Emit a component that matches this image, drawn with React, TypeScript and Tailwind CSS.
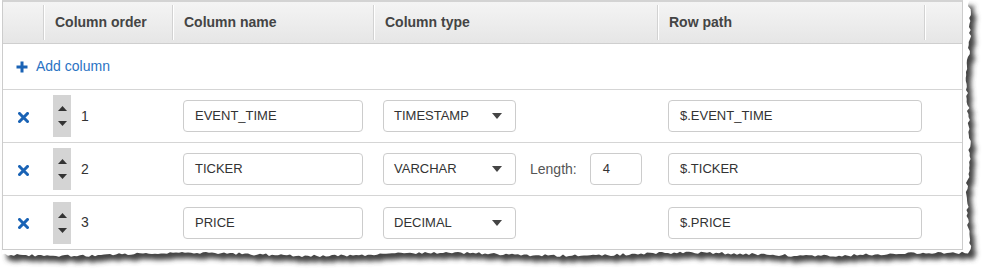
import React from "react";

const font = { fontFamily: '"Liberation Sans", Arial, sans-serif' };

const rows = [
  { n: 1, name: "EVENT_TIME", type: "TIMESTAMP", path: "$.EVENT_TIME" },
  { n: 2, name: "TICKER", type: "VARCHAR", path: "$.TICKER", length: "4" },
  { n: 3, name: "PRICE", type: "DECIMAL", path: "$.PRICE" },
];

const cols = "grid grid-cols-[40px_129px_201px_284px_267px_38px]";

function rand(seed: number) {
  const x = Math.sin(seed * 12.9898) * 43758.5453;
  return x - Math.floor(x);
}

function tornPath(dx: number, dy: number) {
  const pts: string[] = [];
  for (let y = 0; y <= 250; y += 3) {
    const x = 967 + rand(y + 1) * 3 + Math.sin(y / 18) * 1.5;
    pts.push(`${x + dx},${y + dy}`);
  }
  for (let x = 968; x >= 0; x -= 3) {
    const y = 253 + rand(x + 500) * 2.5 + Math.sin(x / 40) * 1.5;
    pts.push(`${x + dx},${y + dy}`);
  }
  pts.push(`${0 + dx},${0 + dy}`);
  return pts.join(" ");
}

function TornEdge() {
  return (
    <svg className="absolute left-0 top-0" width="990" height="276">
      <defs>
        <filter id="blur" x="-5%" y="-5%" width="110%" height="110%">
          <feGaussianBlur stdDeviation="2.4" />
        </filter>
      </defs>
      <polygon points={tornPath(5, 6)} fill="#444" filter="url(#blur)" />
      <polygon points={tornPath(0, 0)} fill="#fff" />
    </svg>
  );
}

function HeaderCell({ label, first }: { label?: string; first?: boolean }) {
  return (
    <div className="flex items-center h-[41px]">
      {!first && <div className="w-px h-[35px] bg-[#d2d2d2] shadow-[1px_0_0_#fff]" />}
      {label && <span className="pl-[11px] text-[14px] font-bold text-[#444]">{label}</span>}
    </div>
  );
}

function RemoveIcon() {
  return (
    <svg width="11" height="11" viewBox="0 0 11 11">
      <path d="M1.5 1.5 L9.5 9.5 M9.5 1.5 L1.5 9.5" stroke="#1a63b5" strokeWidth="3" strokeLinecap="square" />
    </svg>
  );
}

function Stepper() {
  return (
    <div className="w-[18px] h-[42px] bg-[#d4d4d4] flex flex-col items-center justify-between py-[11px]">
      <svg width="9" height="5" viewBox="0 0 9 5">
        <polygon points="0,5 9,5 4.5,0" fill="#333" />
      </svg>
      <svg width="9" height="5" viewBox="0 0 9 5">
        <polygon points="0,0 9,0 4.5,5" fill="#333" />
      </svg>
    </div>
  );
}

const box = "h-[32px] border border-[#ccc] rounded-[4px] bg-white flex items-center text-[13px] text-[#333]";

export default function App() {
  return (
    <div className="relative w-[990px] h-[276px] bg-white overflow-hidden" style={font}>
      <TornEdge />
      <div className="relative ml-[2px] w-[961px] border-x border-b border-[#ccc] border-t-2 border-t-[#d3d3d3] bg-white">
        <div className={`${cols} bg-gradient-to-b from-[#f4f4f4] to-[#e6e6e6] border-b border-[#cfcfcf]`}>
          <HeaderCell first />
          <HeaderCell label="Column order" />
          <HeaderCell label="Column name" />
          <HeaderCell label="Column type" />
          <HeaderCell label="Row path" />
          <HeaderCell />
        </div>
        <div className="h-[46px] border-b border-[#d5d5d5] flex items-center pl-[13px] gap-[8px]">
          <svg width="12" height="12" viewBox="0 0 12 12">
            <path d="M6 0.5 V11.5 M0.5 6 H11.5" stroke="#1a63b5" strokeWidth="3" />
          </svg>
          <span className="text-[14px] text-[#2a73c4]">Add column</span>
        </div>
        {rows.map((r, i) => (
          <div
            key={r.n}
            className={`${cols} h-[53px] items-center ${i < rows.length - 1 ? "border-b border-[#d5d5d5]" : ""}`}
          >
            <div className="flex justify-center pt-[2px]">
              <RemoveIcon />
            </div>
            <div className="flex items-center pl-[10px] gap-[10px]">
              <Stepper />
              <span className="text-[14px] text-[#333]">{r.n}</span>
            </div>
            <div className="pl-[11px]">
              <div className={`${box} w-[180px] px-[11px]`}>{r.name}</div>
            </div>
            <div className="pl-[10px] flex items-center">
              <div className={`${box} w-[133px] pl-[10px] pr-[13px] justify-between`}>
                <span>{r.type}</span>
                <svg width="10" height="6" viewBox="0 0 10 6">
                  <polygon points="0,0 10,0 5,6" fill="#444" />
                </svg>
              </div>
              {r.length && (
                <>
                  <span className="ml-[14px] text-[14px] text-[#555]">Length:</span>
                  <div className={`${box} ml-[13px] w-[52px] px-[12px]`}>{r.length}</div>
                </>
              )}
            </div>
            <div className="pl-[11px]">
              <div className={`${box} w-[254px] px-[11px]`}>{r.path}</div>
            </div>
            <div />
          </div>
        ))}
      </div>
    </div>
  );
}
